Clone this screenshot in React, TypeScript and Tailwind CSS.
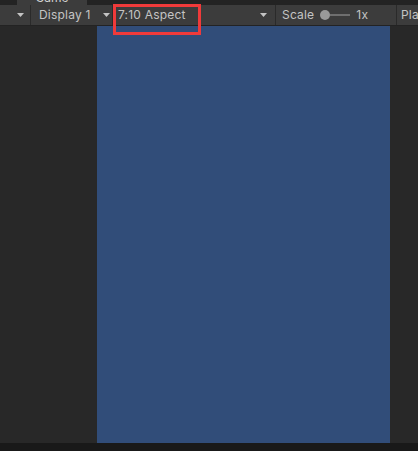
import React from 'react';

const Caret: React.FC = () => (
  <svg width="7" height="4" viewBox="0 0 7 4" className="shrink-0">
    <polygon points="0,0 7,0 3.5,4" fill="#c4c4c4" />
  </svg>
);

const App: React.FC = () => {
  return (
    <div
      className="relative flex h-[451px] w-[418px] flex-col overflow-hidden bg-[#282828] text-[12px] text-[#c4c4c4]"
      style={{ fontFamily: 'Inter, "Noto Sans", sans-serif' }}
    >
      {/* Tab strip, cut off at the top */}
      <div className="flex h-[5px] shrink-0 overflow-hidden bg-[#232323]">
        <div className="ml-[17px] flex w-[70px] justify-center bg-[#3c3c3c]">
          <span className="mt-[-10px] leading-[15px] text-[#d2d2d2]">Game</span>
        </div>
      </div>

      {/* Toolbar */}
      <div className="flex h-[21px] shrink-0 items-center border-b border-[#232323] bg-[#3c3c3c] leading-none tracking-[0.2px]">
        <div className="flex h-full w-[31px] items-center justify-end border-r border-[#2a2a2a] pr-[6px]">
          <Caret />
        </div>
        <div className="flex h-full w-[82px] items-center justify-between border-r border-[#2a2a2a] pl-[8px] pr-[2px]">
          <span>Display 1</span>
          <Caret />
        </div>
        <div className="flex h-full w-[163px] items-center justify-between border-r border-[#2a2a2a] pl-[5px] pr-[8px]">
          <span>7:10 Aspect</span>
          <Caret />
        </div>
        <div className="flex h-full w-[121px] items-center border-r border-[#2a2a2a] pl-[6px]">
          <span>Scale</span>
          <div className="ml-[6px] flex items-center">
            <div className="h-[10px] w-[10px] rounded-full bg-[#999999]" />
            <div className="h-[2px] w-[20px] bg-[#6f6f6f]" />
          </div>
          <span className="ml-[6px]">1x</span>
        </div>
        <div className="flex h-full flex-1 items-center overflow-hidden whitespace-nowrap pl-[4px]">
          <span>Play Focused</span>
        </div>
      </div>

      {/* Game view */}
      <div className="flex flex-1">
        <div className="ml-[97px] w-[293px] bg-[#314d79]" />
      </div>

      {/* Bottom strip */}
      <div className="h-[8px] shrink-0 bg-[#191919]" />

      {/* Red annotation box */}
      <div className="absolute left-[113px] top-[4px] h-[31px] w-[88px] border-[3px] border-[#f03a3a]" />
    </div>
  );
};

export default App;
